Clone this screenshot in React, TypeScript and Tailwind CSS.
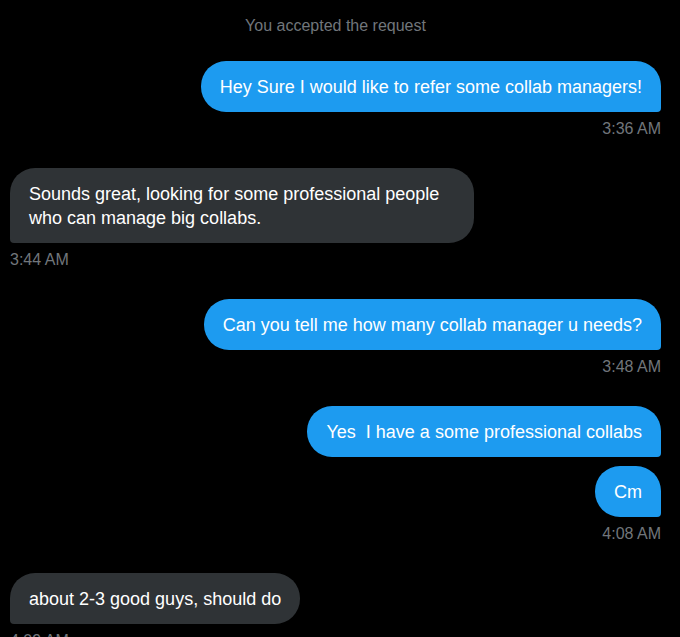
import React from "react";

type Msg = { id: number; text: string[]; mine: boolean; time?: string; tight?: boolean; width?: string };

const MESSAGES: Msg[] = [
  { id: 1, text: ["Hey Sure I would like to refer some collab managers!"], mine: true, time: "3:36 AM" },
  {
    id: 2,
    text: ["Sounds great, looking for some professional people", "who can manage big collabs."],
    mine: false,
    time: "3:44 AM",
    width: "w-[464px]",
  },
  { id: 3, text: ["Can you tell me how many collab manager u needs?"], mine: true, time: "3:48 AM" },
  { id: 4, text: ["Yes\u00a0 I have a some professional collabs"], mine: true },
  { id: 5, text: ["Cm"], mine: true, time: "4:08 AM", tight: true },
  { id: 6, text: ["about 2-3 good guys, should do"], mine: false, time: "4:09 AM" },
];

function Bubble({ msg }: { msg: Msg }) {
  return (
    <div className={`flex flex-col ${msg.mine ? "items-end" : "items-start"} ${msg.tight ? "mt-[9px]" : "mt-[29px]"}`}>
      <div
        className={`px-[19px] py-[13.5px] text-[18px] leading-6 text-white ${msg.width ?? ""} ${
          msg.mine
            ? "bg-[#1d9bf0] rounded-[25px] rounded-br-[4px]"
            : "bg-[#2f3336] rounded-[25px] rounded-bl-[4px]"
        }`}
      >
        {msg.text.map((line, i) => (
          <div key={i}>{line}</div>
        ))}
      </div>
      {msg.time && (
        <div className="mt-[7px] text-[16px] leading-5 text-[#71767b]">{msg.time}</div>
      )}
    </div>
  );
}

export default function App() {
  return (
    <div
      className="min-h-screen bg-black pl-[10px] pr-[19px] pt-[16px]"
      style={{ fontFamily: '"Liberation Sans", Arial, sans-serif' }}
    >
      <div className="text-center text-[16px] leading-5 text-[#71767b]">You accepted the request</div>
      <div className="mt-[-4px]">
        {MESSAGES.map((m) => (
          <Bubble key={m.id} msg={m} />
        ))}
      </div>
    </div>
  );
}
